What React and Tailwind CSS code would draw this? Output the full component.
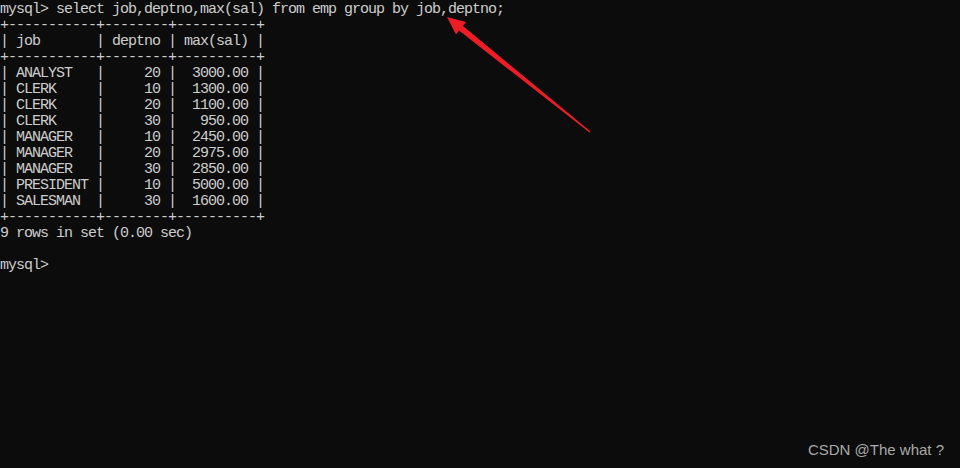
import React from 'react';

const lines = [
  'mysql> select job,deptno,max(sal) from emp group by job,deptno;',
  '+-----------+--------+----------+',
  '| job       | deptno | max(sal) |',
  '+-----------+--------+----------+',
  '| ANALYST   |     20 |  3000.00 |',
  '| CLERK     |     10 |  1300.00 |',
  '| CLERK     |     20 |  1100.00 |',
  '| CLERK     |     30 |   950.00 |',
  '| MANAGER   |     10 |  2450.00 |',
  '| MANAGER   |     20 |  2975.00 |',
  '| MANAGER   |     30 |  2850.00 |',
  '| PRESIDENT |     10 |  5000.00 |',
  '| SALESMAN  |     30 |  1600.00 |',
  '+-----------+--------+----------+',
  '9 rows in set (0.00 sec)',
  '',
  'mysql>',
];

export default function App() {
  return (
    <div className="relative w-[960px] h-[468px] overflow-hidden bg-[#0c0c0c]">
      <div className="flex flex-col pt-0.5 font-['Liberation_Mono',monospace] text-[15px] tracking-[-1px] text-[#cccccc]">
        {lines.map((l, i) => (
          <pre key={i} className="h-4 leading-4 m-0 font-['Liberation_Mono',monospace]">{l}</pre>
        ))}
      </div>

      {/* red annotation arrow */}
      <svg className="absolute inset-0" width="960" height="468" viewBox="0 0 960 468">
        <polygon
          points="447,17 466,22 463,26 590.5,131.5 589.5,132.5 459,30.6 456,34.5"
          fill="#ee1c25"
        />
      </svg>

      <span className="absolute right-[16px] bottom-[7px] font-['Liberation_Sans',sans-serif] text-[15px] text-[#a9a9a9]">
        CSDN @The what ?
      </span>
    </div>
  );
}
